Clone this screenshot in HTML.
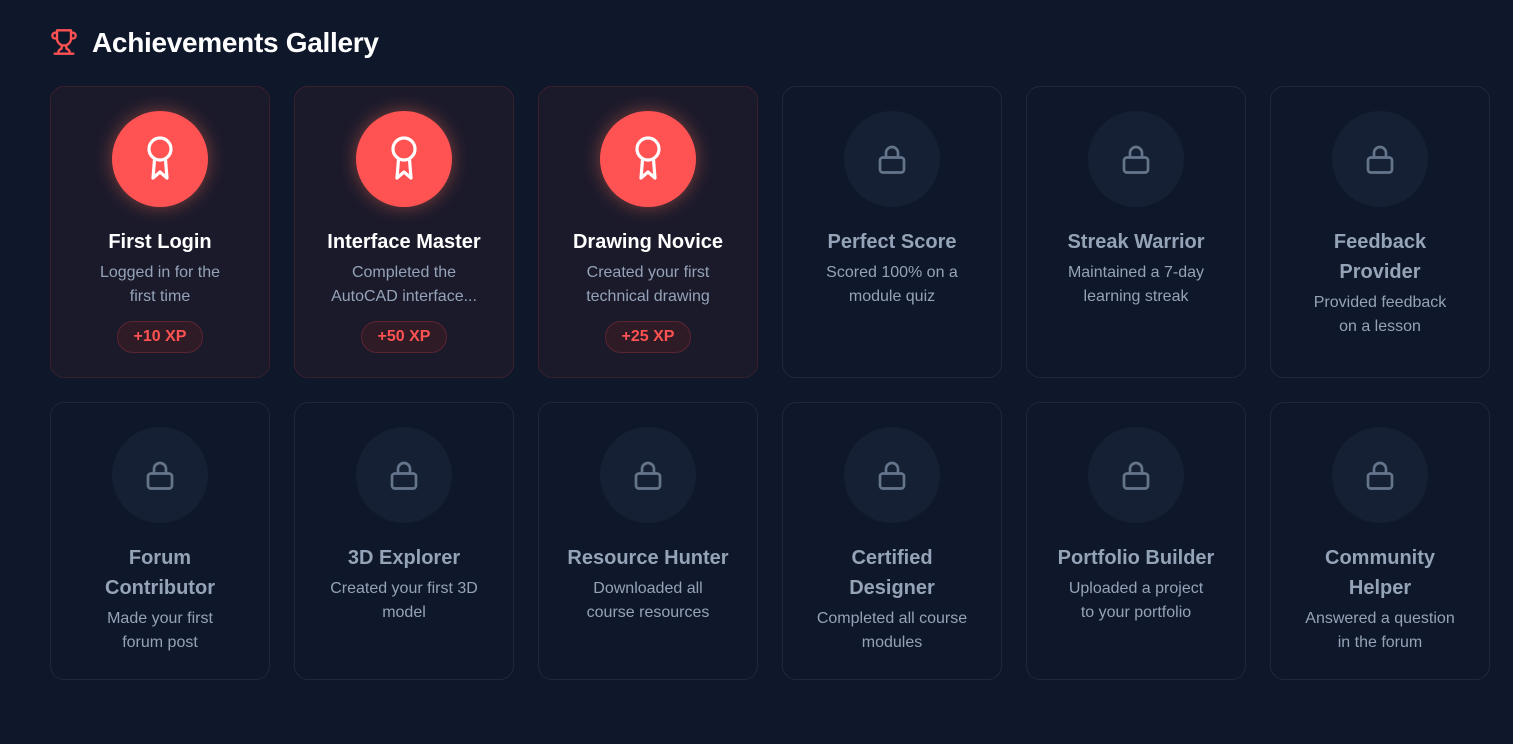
<!DOCTYPE html>
<html><head><meta charset="utf-8"><style>
*{box-sizing:border-box;margin:0;padding:0}
body{width:1513px;height:744px;background:#0f172a;font-family:"Liberation Sans",sans-serif;overflow:hidden}
h1{position:absolute;left:50px;top:24px;height:38px;display:flex;align-items:center;color:#fff;font-size:28px;font-weight:bold;letter-spacing:-0.3px}
h1 svg{margin-right:14px;margin-top:-2px}
.grid{position:absolute;left:50px;top:86px;display:grid;grid-template-columns:repeat(6,220px);gap:24px;width:1440px}
.c{border:1px solid #1e293b;border-radius:14px;padding:24px 12px;text-align:center;background:#0f172a;display:flex;flex-direction:column;align-items:center}
.c.u{background:#1b1a2b;border-color:#3b1f2c}
.ic{width:96px;height:96px;border-radius:50%;background:#162034;display:flex;align-items:center;justify-content:center;margin-bottom:20px}
.u .ic{background:#ff5252;box-shadow:0 0 18px rgba(255,110,80,.45)}
.t{font-size:20px;font-weight:bold;line-height:30px;color:#94a3b8;margin-bottom:4px;padding:0 14px}
.u .t{color:#fff}
.d{font-size:16px;line-height:24px;color:#94a3b8;white-space:nowrap}
.b{margin-top:12px;height:32px;line-height:30px;padding:0 16px;border-radius:16px;border:1px solid #5a2430;background:#2e1b26;color:#ff5252;font-weight:bold;font-size:16px}
</style></head><body>
<h1><svg width="28" height="30" viewBox="0 0 24 24" fill="none" stroke="#ff5252" stroke-width="2" stroke-linecap="round" stroke-linejoin="round"><path d="M6 9H4.5a2.5 2.5 0 0 1 0-5H6"/><path d="M18 9h1.5a2.5 2.5 0 0 0 0-5H18"/><path d="M4 22h16"/><path d="M10 14.66V17c0 .55-.47.98-.97 1.21C7.85 18.75 7 20.24 7 22"/><path d="M14 14.66V17c0 .55.47.98.97 1.21C16.15 18.75 17 20.24 17 22"/><path d="M18 2H6v7a6 6 0 0 0 12 0V2Z"/></svg>Achievements Gallery</h1>
<div class="grid">
<div class="c u"><div class="ic">R</div><div class="t">First Login</div><div class="d">Logged in for the<br>first time</div><div class="b">+10 XP</div></div>
<div class="c u"><div class="ic">R</div><div class="t">Interface Master</div><div class="d">Completed the<br>AutoCAD interface...</div><div class="b">+50 XP</div></div>
<div class="c u"><div class="ic">R</div><div class="t">Drawing Novice</div><div class="d">Created your first<br>technical drawing</div><div class="b">+25 XP</div></div>
<div class="c"><div class="ic">L</div><div class="t">Perfect Score</div><div class="d">Scored 100% on a<br>module quiz</div></div>
<div class="c"><div class="ic">L</div><div class="t">Streak Warrior</div><div class="d">Maintained a 7-day<br>learning streak</div></div>
<div class="c"><div class="ic">L</div><div class="t">Feedback<br>Provider</div><div class="d">Provided feedback<br>on a lesson</div></div>
<div class="c"><div class="ic">L</div><div class="t">Forum<br>Contributor</div><div class="d">Made your first<br>forum post</div></div>
<div class="c"><div class="ic">L</div><div class="t">3D Explorer</div><div class="d">Created your first 3D<br>model</div></div>
<div class="c"><div class="ic">L</div><div class="t">Resource Hunter</div><div class="d">Downloaded all<br>course resources</div></div>
<div class="c"><div class="ic">L</div><div class="t">Certified<br>Designer</div><div class="d">Completed all course<br>modules</div></div>
<div class="c"><div class="ic">L</div><div class="t">Portfolio Builder</div><div class="d">Uploaded a project<br>to your portfolio</div></div>
<div class="c"><div class="ic">L</div><div class="t">Community<br>Helper</div><div class="d">Answered a question<br>in the forum</div></div>
</div>
<script>
document.querySelectorAll('.c:not(.u) .ic').forEach(e=>{e.innerHTML='<svg width="36" height="36" viewBox="0 0 24 24" fill="none" stroke="#64748b" stroke-width="1.8" stroke-linecap="round" stroke-linejoin="round"><rect x="4" y="11" width="16" height="10" rx="2"/><path d="M8 11V8a4 4 0 0 1 8 0v3"/></svg>'});
document.querySelectorAll('.u .ic').forEach(e=>{e.innerHTML='<svg width="50" height="50" viewBox="0 0 50 50" fill="none" stroke="#fff" stroke-width="3.2" stroke-linecap="round" stroke-linejoin="round"><circle cx="25" cy="15" r="11"/><path d="M19.5 25.5 18 44 25 38 32 44 30.5 25.5"/></svg>'});
</script>
</body></html>
